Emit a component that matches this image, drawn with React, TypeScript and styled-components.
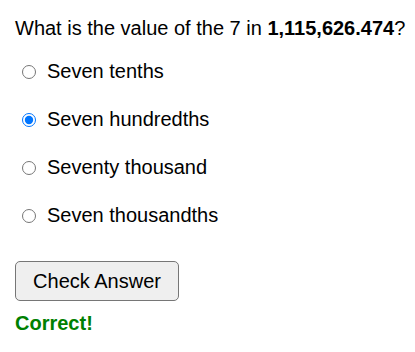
import React, { useState } from 'react';
import styled, { createGlobalStyle } from 'styled-components';

const GlobalStyle = createGlobalStyle`
  body {
    margin: 0;
    background: #ffffff;
    font-family: "Liberation Sans", Arial, sans-serif;
    color: #000000;
  }
`;

const Quiz = styled.div`
  padding: 8px 10px 8px 15px;
  font-size: 20px;
`;

const Question = styled.p`
  margin: 9px 0 20px;
  line-height: 23px;
  white-space: nowrap;
`;

const Options = styled.div`
  display: flex;
  flex-direction: column;
  gap: 25px;
  margin-bottom: 34px;
`;

const Option = styled.label`
  display: flex;
  align-items: center;
  gap: 11px;
  line-height: 23px;
  padding-left: 7px;
  cursor: pointer;
`;

const Radio = styled.input`
  margin: 0;
  width: 14px;
  height: 14px;
`;

const CheckButton = styled.button`
  font-family: inherit;
  font-size: 20px;
  padding: 0 17px;
  height: 40px;
  width: 164px;
  background: #efefef;
  border: 1px solid #767676;
  border-radius: 5px;
  color: #000000;
`;

const Feedback = styled.p<{ $ok: boolean }>`
  margin: 11px 0 0;
  font-weight: bold;
  line-height: 23px;
  color: ${(p) => (p.$ok ? '#008000' : '#cc0000')};
`;

const options = ['Seven tenths', 'Seven hundredths', 'Seventy thousand', 'Seven thousandths'];

export default function App() {
  const [picked, setPicked] = useState(1);

  return (
    <>
      <GlobalStyle />
      <Quiz>
        <Question>
          What is the value of the 7 in <b>1,115,626.474</b>?
        </Question>
        <Options>
          {options.map((text, i) => (
            <Option key={text}>
              <Radio
                type="radio"
                name="answer"
                checked={picked === i}
                onChange={() => setPicked(i)}
              />
              {text}
            </Option>
          ))}
        </Options>
        <CheckButton>Check Answer</CheckButton>
        <Feedback $ok={picked === 1}>Correct!</Feedback>
      </Quiz>
    </>
  );
}
